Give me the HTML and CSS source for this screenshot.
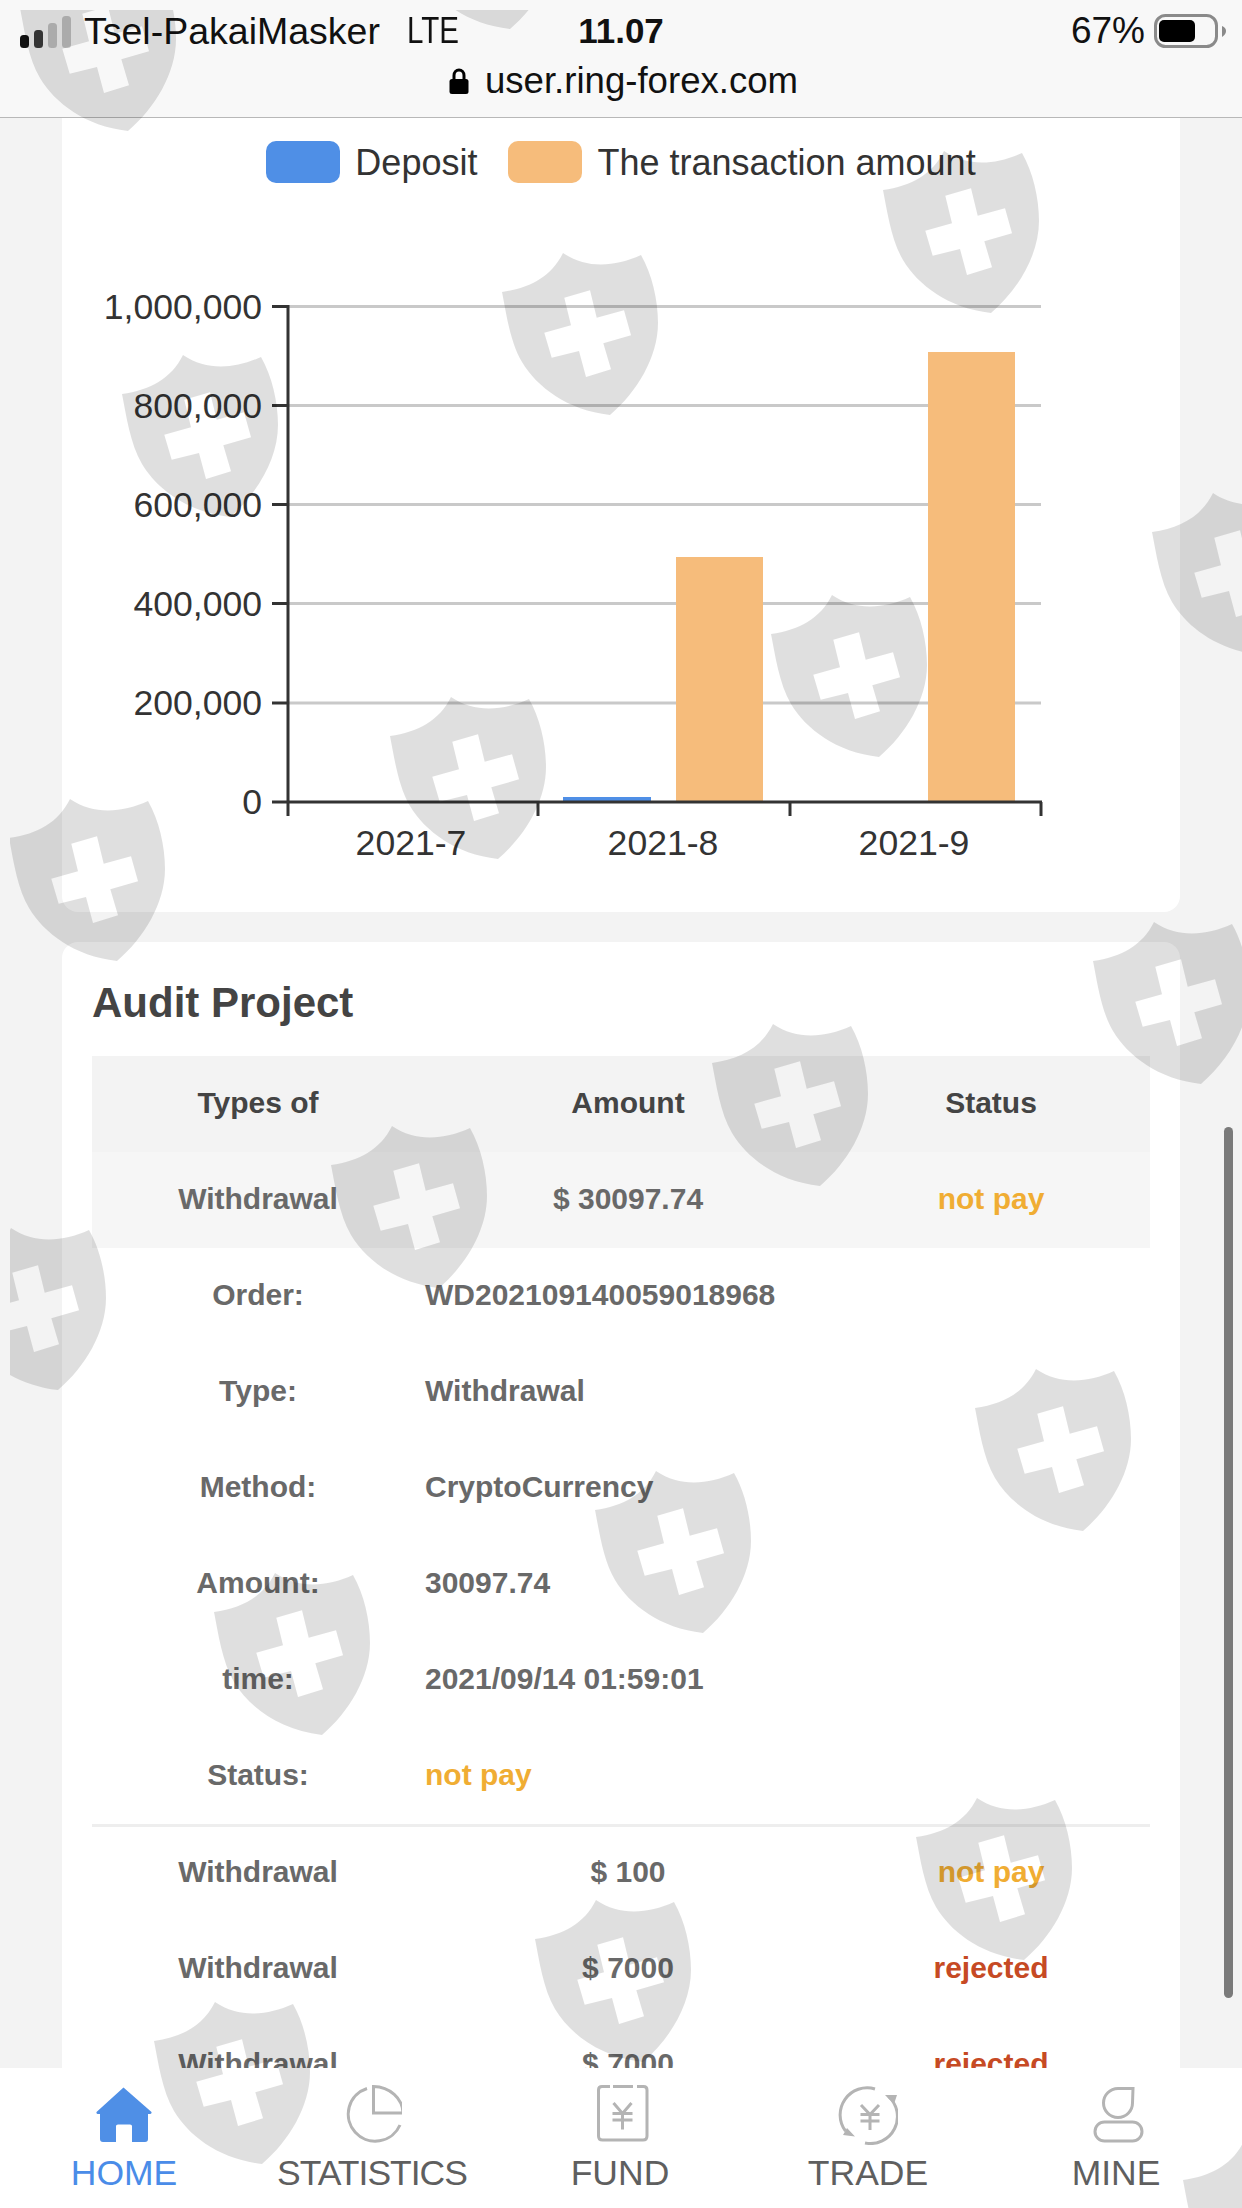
FILE: index.html
```html
<!DOCTYPE html>
<html lang="en">
<head>
<meta charset="utf-8">
<title>Audit Project</title>
<link rel="stylesheet" href="styles.css">
</head>
<body>
<div class="phone">
  <header class="browser-bar">
    <div class="status-row">
      <div class="status-left">
        <svg class="signal" viewBox="0 0 52 33" width="52" height="33">
          <rect class="sig-on" x="0" y="20" width="9" height="13" rx="3.5"/>
          <rect class="sig-on2" x="14" y="15" width="9" height="18" rx="3.5"/>
          <rect class="sig-off" x="28" y="8" width="9" height="25" rx="3.5"/>
          <rect class="sig-off" x="42" y="1" width="9" height="32" rx="3.5"/>
        </svg>
        <span class="carrier">Tsel-PakaiMasker</span>
        <span class="network">LTE</span>
      </div>
      <div class="clock">11.07</div>
      <div class="status-right">
        <span class="percent">67%</span>
        <svg class="battery" viewBox="0 0 72 34" width="72" height="34">
          <rect class="batt-shell" x="1.5" y="1.5" width="61" height="31" rx="10"/>
          <rect class="batt-level" x="5" y="6" width="36" height="22" rx="5"/>
          <path class="batt-nub" d="M68 12 C71 13 72 15 72 17 C72 19 71 21 68 23 Z"/>
        </svg>
      </div>
    </div>
    <div class="url-row">
      <svg class="lock" viewBox="0 0 20 26" width="20" height="26">
        <path class="lock-shackle" d="M5 12 V7.5 A5 5.5 0 0 1 15 7.5 V12"/>
        <rect class="lock-body" x="0.5" y="11" width="19" height="15" rx="2.5"/>
      </svg>
      <span class="url">user.ring-forex.com</span>
    </div>
  </header>

  <main class="content">
    <section class="card card-chart">
      <div class="legend">
        <div class="legend-item"><span class="swatch swatch-blue"></span><span>Deposit</span></div>
        <div class="legend-item"><span class="swatch swatch-orange"></span><span>The transaction amount</span></div>
      </div>
      <svg class="chart" viewBox="62 183 1118 729" width="1118" height="729">
        <g class="grid-lines">
          <line x1="288" x2="1041" y1="306.5" y2="306.5"/>
          <line x1="288" x2="1041" y1="405.5" y2="405.5"/>
          <line x1="288" x2="1041" y1="504.5" y2="504.5"/>
          <line x1="288" x2="1041" y1="603.5" y2="603.5"/>
          <line x1="288" x2="1041" y1="703" y2="703"/>
        </g>
        <rect class="bar-blue" x="563" y="797" width="88" height="5"/>
        <rect class="bar-orange" x="676" y="557" width="87" height="245"/>
        <rect class="bar-orange" x="928" y="352" width="87" height="450"/>
        <g class="axis">
          <line x1="288" x2="288" y1="305" y2="816"/>
          <line x1="272" x2="1042" y1="802" y2="802"/>
          <line x1="272" x2="288" y1="306.5" y2="306.5"/>
          <line x1="272" x2="288" y1="405.5" y2="405.5"/>
          <line x1="272" x2="288" y1="504.5" y2="504.5"/>
          <line x1="272" x2="288" y1="603.5" y2="603.5"/>
          <line x1="272" x2="288" y1="703" y2="703"/>
          <line x1="538" x2="538" y1="802" y2="816"/>
          <line x1="790" x2="790" y1="802" y2="816"/>
          <line x1="1041" x2="1041" y1="802" y2="816"/>
        </g>
        <g class="y-labels">
          <text x="262" y="319">1,000,000</text>
          <text x="262" y="418">800,000</text>
          <text x="262" y="517">600,000</text>
          <text x="262" y="616">400,000</text>
          <text x="262" y="715">200,000</text>
          <text x="262" y="814">0</text>
        </g>
        <g class="x-labels">
          <text x="411" y="855">2021-7</text>
          <text x="663" y="855">2021-8</text>
          <text x="914" y="855">2021-9</text>
        </g>
      </svg>
    </section>

    <section class="card card-audit">
      <h2 class="audit-title">Audit Project</h2>
      <div class="table">
        <div class="row row-head">
          <div>Types of</div>
          <div>Amount</div>
          <div>Status</div>
        </div>
        <div class="row row-open">
          <div>Withdrawal</div>
          <div>$ 30097.74</div>
          <div class="st-pending">not pay</div>
        </div>
        <div class="detail">
          <div class="detail-row"><div class="detail-label">Order:</div><div>WD202109140059018968</div></div>
          <div class="detail-row"><div class="detail-label">Type:</div><div>Withdrawal</div></div>
          <div class="detail-row"><div class="detail-label">Method:</div><div>CryptoCurrency</div></div>
          <div class="detail-row"><div class="detail-label">Amount:</div><div>30097.74</div></div>
          <div class="detail-row"><div class="detail-label">time:</div><div>2021/09/14 01:59:01</div></div>
          <div class="detail-row"><div class="detail-label">Status:</div><div class="st-pending">not pay</div></div>
        </div>
        <div class="divider"></div>
        <div class="row">
          <div>Withdrawal</div>
          <div>$ 100</div>
          <div class="st-pending">not pay</div>
        </div>
        <div class="row">
          <div>Withdrawal</div>
          <div>$ 7000</div>
          <div class="st-rejected">rejected</div>
        </div>
        <div class="row">
          <div>Withdrawal</div>
          <div>$ 7000</div>
          <div class="st-rejected">rejected</div>
        </div>
      </div>
    </section>
  </main>

  <nav class="tabbar">
    <div class="tab tab-active">
      <svg class="tab-icon" viewBox="0 0 60 60" width="60" height="60">
        <path class="home-fill" d="M29.5 2.5 L57.5 27 Q58 29 55 29 H54 V54 Q54 57 51 57 H38 V41 Q38 39.5 36 39.5 H24 Q22 39.5 22 41 V57 H9 Q6 57 6 54 V29 H4.5 Q2 29 2.5 27 Z"/>
      </svg>
      <span>HOME</span>
    </div>
    <div class="tab">
      <svg class="tab-icon" viewBox="0 0 60 60" width="60" height="60">
        <path class="ico" d="M25 3.5 A27 27 0 1 0 58 40"/>
        <path class="ico" d="M31.5 1.5 V28 H61 A30 27 0 0 0 31.5 1.5 Z"/>
      </svg>
      <span class="tab-tight">STATISTICS</span>
    </div>
    <div class="tab">
      <svg class="tab-icon" viewBox="0 0 60 60" width="60" height="60">
        <path class="ico" d="M20 1.5 H12 Q8.5 1.5 8.5 5 V51 Q8.5 55 12.5 55 H53 Q57 55 57 51 V5 Q57 1.5 53.5 1.5 H47"/>
        <path class="ico" d="M23 1.5 H43"/>
        <path class="ico" d="M23.5 18 L32.5 28.5 L41.5 18 M22.5 28.5 H42.5 M22.5 35 H42.5 M32.5 28.5 V44.5"/>
      </svg>
      <span>FUND</span>
    </div>
    <div class="tab">
      <svg class="tab-icon" viewBox="0 0 60 60" width="60" height="60">
        <path class="ico" d="M37 4 A27 27 0 0 0 7.5 46"/>
        <path class="ico" d="M50.5 11.5 A27 27 0 0 1 27 58"/>
        <path class="ico-solid" d="M5 50 L17 51.5 L9 43 Z M47 10 L59 10 L56 19 Z"/>
        <path class="ico" d="M23 20 L32 29.5 L41 20 M22.5 29.5 H41.5 M22.5 36 H41.5 M32 29.5 V45"/>
      </svg>
      <span>TRADE</span>
    </div>
    <div class="tab">
      <svg class="tab-icon" viewBox="0 0 60 60" width="60" height="60">
        <path class="ico" d="M47 3.5 H32 A14.5 14.5 0 1 0 46.5 18 Z"/>
        <rect class="ico" x="9" y="37" width="47" height="19" rx="9.5"/>
      </svg>
      <span>MINE</span>
    </div>
  </nav>

  <div class="scrollbar"></div>

  <svg class="watermarks" viewBox="10 10 1232 2198" width="1232" height="2198" aria-hidden="true">
    <defs>
      <path id="shield" class="shield" fill-rule="evenodd" d="M61 1 C85 17 112 15 139 3 C150 22 156 48 156 71 C156 105 135 140 108 163 C65 158 35 135 20 110 C8 90 4 60 0 40 C28 36 49 25 61 1 Z M62.3 45.7 L69 73.3 L42.3 80.7 L49.7 105.7 L77 99 L84 125 L109 117.3 L101.3 91.3 L129 83.3 L122 58.3 L94.7 65.7 L88 38.3 Z"/>
    </defs>
    <use href="#shield" x="20" y="-32"/>
    <use href="#shield" x="402" y="-134"/>
    <use href="#shield" x="883" y="150"/>
    <use href="#shield" x="502" y="252"/>
    <use href="#shield" x="122" y="354"/>
    <use href="#shield" x="1152" y="492"/>
    <use href="#shield" x="771" y="594"/>
    <use href="#shield" x="390" y="696"/>
    <use href="#shield" x="9" y="798"/>
    <use href="#shield" x="1093" y="921"/>
    <use href="#shield" x="712" y="1023"/>
    <use href="#shield" x="331" y="1125"/>
    <use href="#shield" x="-50" y="1227"/>
    <use href="#shield" x="975" y="1368"/>
    <use href="#shield" x="595" y="1470"/>
    <use href="#shield" x="214" y="1572"/>
    <use href="#shield" x="916" y="1797"/>
    <use href="#shield" x="535" y="1899"/>
    <use href="#shield" x="154" y="2001"/>
    <use href="#shield" x="1183" y="2140"/>
  </svg>
</div>
</body>
</html>
```
FILE: styles.css
```css
* { box-sizing: border-box; }
html, body { margin: 0; padding: 0; }
body {
  width: 1242px;
  height: 2208px;
  overflow: hidden;
  font-family: "Liberation Sans", Arial, sans-serif;
  background: #f3f3f3;
}
.phone {
  position: relative;
  width: 1242px;
  height: 2208px;
  display: flex;
  flex-direction: column;
  overflow: hidden;
  background: #f3f3f3;
}

/* browser bar */
.browser-bar {
  flex: 0 0 118px;
  background: #f8f8f8;
  border-bottom: 1px solid #b8b8b8;
  color: #111;
}
.status-row {
  height: 62px;
  display: grid;
  grid-template-columns: 1fr auto 1fr;
  align-items: center;
}
.status-left {
  display: flex;
  align-items: center;
  padding-left: 20px;
}
.signal { flex: none; }
.sig-on { fill: #111; }
.sig-on2 { fill: #3c3c3c; }
.sig-off { fill: #c4c4c4; }
.carrier { margin-left: 12px; font-size: 37.5px; }
.network {
  display: inline-block;
  margin-left: 27px;
  font-size: 36px;
  transform: scaleX(0.82);
  transform-origin: left center;
}
.clock { font-size: 35px; font-weight: 700; }
.status-right {
  display: flex;
  justify-content: flex-end;
  align-items: center;
  gap: 9px;
  padding-right: 16px;
}
.percent { font-size: 37px; }
.batt-shell { fill: none; stroke: #8a8a8a; stroke-width: 3; }
.batt-level { fill: #000; }
.batt-nub { fill: #8a8a8a; }
.url-row {
  height: 37px;
  padding-left: 5px;
  display: flex;
  justify-content: center;
  align-items: center;
  gap: 16px;
}
.url { font-size: 36.6px; }
.lock-shackle { fill: none; stroke: #000; stroke-width: 3; }
.lock-body { fill: #000; }

/* content */
.content {
  flex: 1 1 0;
  min-height: 0;
  overflow: hidden;
  padding: 0 62px;
}
.card { background: #fff; }
.card-chart {
  height: 794px;
  padding-top: 23px;
  border-radius: 0 0 16px 16px;
}
.legend {
  display: flex;
  justify-content: center;
  gap: 31px;
  font-size: 36px;
  color: #333;
}
.legend-item {
  display: flex;
  align-items: center;
  gap: 15px;
  height: 42px;
}
.legend-item span:last-child { padding-top: 2px; }
.swatch {
  width: 74px;
  height: 42px;
  border-radius: 10px;
}
.swatch-blue { background: #4f8fe6; }
.swatch-orange { background: #f6bc7b; }
.chart { display: block; }
.grid-lines line { stroke: #c9c9c9; stroke-width: 3; }
.bar-blue { fill: #4f8fe6; }
.bar-orange { fill: #f6bc7b; }
.axis line { stroke: #333; stroke-width: 3; }
.y-labels text, .x-labels text {
  font-family: "Liberation Sans", Arial, sans-serif;
  font-size: 35.6px;
  fill: #333;
}
.y-labels text { text-anchor: end; }
.x-labels text { text-anchor: middle; }

.card-audit {
  margin-top: 30px;
  padding: 31px 30px 0;
  border-radius: 16px 16px 0 0;
}
.audit-title {
  margin: 0 0 23px;
  font-size: 42px;
  line-height: 60px;
  font-weight: 700;
  color: #444;
}
.table {
  font-size: 30px;
  font-weight: 700;
  color: #696969;
}
.row {
  display: grid;
  grid-template-columns: 332px 408px 318px;
  height: 96px;
  align-items: center;
  text-align: center;
}
.row-head { background: #f3f3f3; color: #444; }
.row-open { background: #f6f6f6; }
.row-head, .row-open, .detail-row { padding-bottom: 2px; }
.detail-row {
  display: grid;
  grid-template-columns: 332px 1fr;
  column-gap: 1px;
  height: 96px;
  align-items: center;
}
.detail-label { text-align: center; }
.divider {
  height: 3px;
  margin-bottom: -3px;
  background: #eeeeee;
}
.st-pending { color: #f0ad33; }
.st-rejected { color: #c64a24; }

/* tab bar */
.tabbar {
  flex: 0 0 140px;
  display: grid;
  grid-template-columns: repeat(5, 248px);
  background: #fff;
  position: relative;
}
.tab {
  display: flex;
  flex-direction: column;
  align-items: center;
  padding-top: 17px;
  font-size: 35.5px;
  line-height: 40px;
  color: #5f5f5f;
}
.tab-tight { letter-spacing: -1px; }
.tab-icon { display: block; margin-bottom: 8px; filter: blur(0.6px); }
.tab-active { color: #4a8ce8; }
.home-fill { fill: #4f8fe6; }
.ico { fill: none; stroke: #b4b4b4; stroke-width: 3; }
.ico-solid { fill: #b4b4b4; }

/* overlays */
.scrollbar {
  position: absolute;
  left: 1224px;
  top: 1127px;
  width: 9px;
  height: 871px;
  border-radius: 5px;
  background: #7a7a7a;
}
.watermarks {
  position: absolute;
  left: 10px;
  top: 10px;
  pointer-events: none;
}
.shield { fill: rgba(0, 0, 0, 0.125); }
```
